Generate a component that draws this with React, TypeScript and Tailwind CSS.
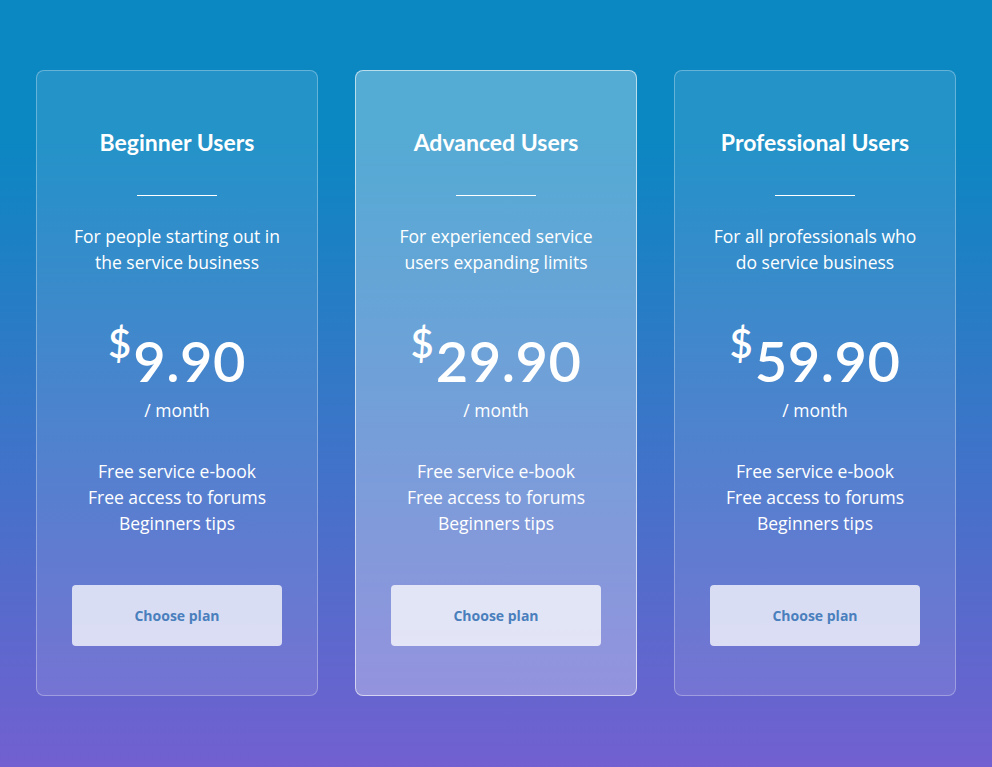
const plans = [
	{ title: 'Beginner Users', desc: ['For people starting out in', 'the service business'], price: '9.90', featured: false },
	{ title: 'Advanced Users', desc: ['For experienced service', 'users expanding limits'], price: '29.90', featured: true },
	{ title: 'Professional Users', desc: ['For all professionals who', 'do service business'], price: '59.90', featured: false },
];

const features = ['Free service e-book', 'Free access to forums', 'Beginners tips'];

function PlanCard({ plan }: { plan: (typeof plans)[number] }) {
	return (
		<div
			className={
				plan.featured
					? 'flex w-[282px] flex-col items-center rounded-lg border border-white/60 bg-white/30 text-white'
					: 'flex w-[282px] flex-col items-center rounded-lg border border-white/30 bg-white/10 text-white'
			}
		>
			<h2 className="mt-[57px] font-['Lato',sans-serif] text-[23px] font-bold leading-[28px] tracking-[0px]">
				{plan.title}
			</h2>
			<div className="mt-[39px] h-px w-20 bg-white" />
			<p className="mt-[27px] text-center font-['Open_Sans',sans-serif] text-[17.5px] leading-[26px]">
				{plan.desc[0]}
				<br />
				{plan.desc[1]}
			</p>
			<div className="mt-[58px] flex items-start font-['Lato',sans-serif] leading-none">
				<span className="mt-[-10px] mr-[2px] text-[40px] font-semibold">$</span>
				<span className="text-[56px] font-semibold tracking-[0.5px]">{plan.price}</span>
			</div>
			<p className="mt-[8px] font-['Open_Sans',sans-serif] text-[17.5px] leading-[26px]">/ month</p>
			<ul className="mt-[35px] text-center font-['Open_Sans',sans-serif] text-[17.5px] leading-[26px]">
				{features.map(f => (
					<li key={f}>{f}</li>
				))}
			</ul>
			<button className="mt-[49px] h-[61px] w-[210px] rounded bg-white/75 font-['Open_Sans',sans-serif] text-[14px] font-bold text-[#4a7fbd]">
				Choose plan
			</button>
		</div>
	);
}

export default function App() {
	return (
		<div className="flex min-h-[767px] justify-center gap-[37px] bg-[linear-gradient(180deg,#0b87c2_18%,#7260d0_100%)] pt-[70px] pb-[71px]">
			{plans.map(p => (
				<PlanCard key={p.title} plan={p} />
			))}
		</div>
	);
}
